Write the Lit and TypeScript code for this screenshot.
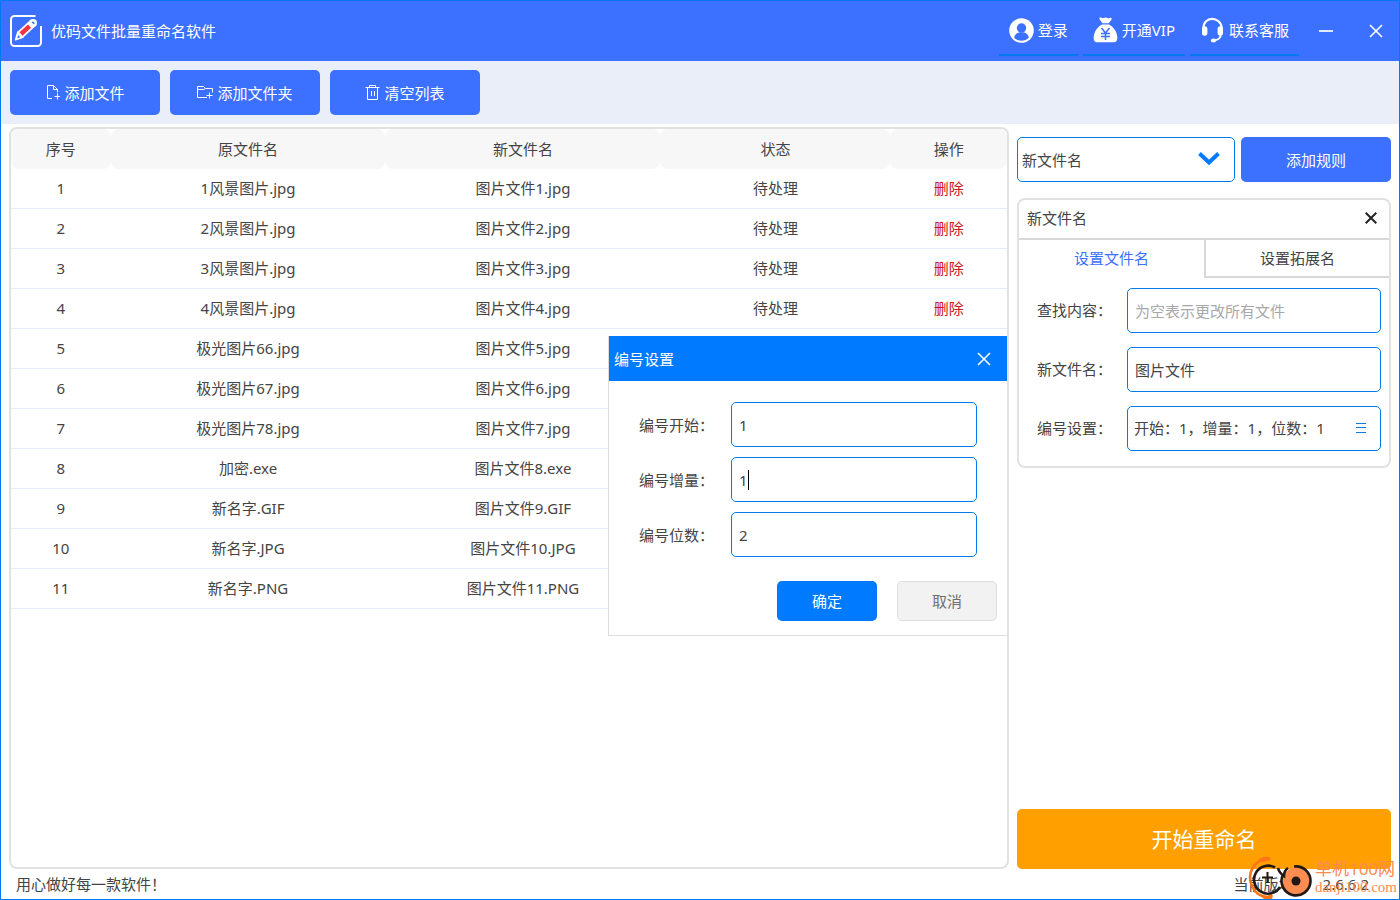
import { LitElement, html, css, svg } from "lit";
import { customElement, state } from "lit/decorators.js";

interface FileRow {
  source: string;
  target: string;
}

const ROWS: FileRow[] = [
  { source: "1风景图片.jpg", target: "图片文件1.jpg" },
  { source: "2风景图片.jpg", target: "图片文件2.jpg" },
  { source: "3风景图片.jpg", target: "图片文件3.jpg" },
  { source: "4风景图片.jpg", target: "图片文件4.jpg" },
  { source: "极光图片66.jpg", target: "图片文件5.jpg" },
  { source: "极光图片67.jpg", target: "图片文件6.jpg" },
  { source: "极光图片78.jpg", target: "图片文件7.jpg" },
  { source: "加密.exe", target: "图片文件8.exe" },
  { source: "新名字.GIF", target: "图片文件9.GIF" },
  { source: "新名字.JPG", target: "图片文件10.JPG" },
  { source: "新名字.PNG", target: "图片文件11.PNG" },
];

const base = css`
  *, *::before, *::after { box-sizing: border-box; }
  button, input, select {
    font: inherit;
    color: inherit;
    margin: 0;
    padding: 0;
    border: 0;
    background: none;
    outline: none;
  }
  svg { display: block; flex: none; }
`;

const cross = html`<svg width="14" height="14" viewBox="0 0 14 14" fill="none" stroke="currentColor" stroke-width="1.6">
  <path d="M1 1 13 13M13 1 1 13" />
</svg>`;

@customElement("title-bar")
export class TitleBar extends LitElement {
  static styles = [base, css`
    :host {
      display: flex;
      align-items: center;
      justify-content: space-between;
      height: 60px;
      padding: 0 16px 0 8px;
      background: #3c70ff;
      color: #fff;
    }
    .brand { display: flex; align-items: center; gap: 8px; }
    .actions { display: flex; align-items: center; gap: 5px; }
    .link {
      display: flex;
      align-items: center;
      gap: 4px;
      height: 50px;
      padding: 0 10px;
      border-bottom: 2px solid #0078f0;
      color: inherit;
      text-decoration: none;
      white-space: nowrap;
    }
    .win { display: flex; align-items: center; justify-content: center; width: 14px; height: 30px; }
    .window { display: flex; gap: 36px; margin-left: 15px; }
  `];

  render() {
    return html`
      <div class="brand">
        <svg width="34" height="34" viewBox="0 0 34 34" fill="none">
          <path d="M26.500 2H5.500A3.500 3.500 0 0 0 2 5.500v23A3.500 3.500 0 0 0 5.500 32h23a3.500 3.500 0 0 0 3.500-3.500V12" stroke="#fff" stroke-width="2" />
          <path d="M11.500 20.500 24 9" stroke="#fff" stroke-width="8" />
          <circle cx="24" cy="9" r="4" fill="#fff" />
          <path d="M8.700 17.500 6.200 26.200l8.100-2.800Z" fill="#fff" stroke="#fff" stroke-linejoin="round" />
          <path d="m12 20 8.500-7.800" stroke="#f5333f" stroke-width="4.500" />
          <path d="M22.500 8.200a1.700 1.700 0 0 1 2.600 2.300ZM9.300 21l-.9 3.200 3-1Z" fill="#3c70ff" />
        </svg>
        <span>优码文件批量重命名软件</span>
      </div>
      <nav class="actions">
        <a class="link" href="#login">
          <svg width="25" height="25" viewBox="0 0 25 25">
            <circle cx="12.500" cy="12.500" r="12.300" fill="#fff" />
            <circle cx="12.500" cy="10" r="4.700" fill="#3c70ff" />
            <path d="M5.200 19.800c.6-3.600 3-5.600 7.300-5.600s6.700 2 7.300 5.600c-2 2-4.300 2.900-7.300 2.900s-5.300-.9-7.300-2.900Z" fill="#3c70ff" />
          </svg>
          <span>登录</span>
        </a>
        <a class="link" href="#vip">
          <svg width="25" height="26" viewBox="0 0 25 26">
            <path fill="#fff" d="M6.500.8c1.700-.9 2.700 1 4 .3 1.300-.8 2.700-.8 4 0 1.300.7 2.500-1 4-.2.700 2.400-1.800 3.200-2.600 5.400H9.200C8.600 3.900 6 3.200 6.500.8ZM9 7.600h7c4.800 2.600 7.800 7 8.300 12.500.2 3.600-1.300 5.200-3.300 5.200H4c-2.200 0-3.500-1.600-3.300-5C1.200 14.600 4.200 10.200 9 7.600Z" />
            <path fill="none" stroke="#3c70ff" stroke-width="1.500" d="m8.500 11 4 5 4-5M12.500 16v7M8 16.500h9M8 19.500h9" />
          </svg>
          <span>开通VIP</span>
        </a>
        <a class="link" href="#support">
          <svg width="25" height="26" viewBox="0 0 25 26" fill="none" stroke="#fff">
            <path d="M3.500 11C3.500 5.200 7.500 1.800 12 1.800s9.600 3.400 9.600 9.200" stroke-width="2.200" />
            <path d="M4.700 12v4M20.300 12v4" stroke-width="5.400" stroke-linecap="round" />
            <path d="M21 17c-.2 4-2.700 6-7 6.600" stroke-width="1.800" />
            <ellipse cx="13.500" cy="23.500" rx="2.700" ry="2" fill="#fff" stroke="none" />
          </svg>
          <span>联系客服</span>
        </a>
        <span class="window">
          <button class="win" aria-label="最小化">
            <svg width="14" height="2" viewBox="0 0 14 2"><path d="M0 1h14" stroke="#fff" stroke-width="2" stroke-opacity=".85" /></svg>
          </button>
          <button class="win" aria-label="关闭">${cross}</button>
        </span>
      </nav>
    `;
  }
}

@customElement("tool-bar")
export class ToolBar extends LitElement {
  static styles = [base, css`
    :host { display: flex; gap: 10px; padding: 9px; background: #e9eef8; }
    .btn {
      display: flex;
      align-items: center;
      justify-content: center;
      gap: 4px;
      width: 150px;
      height: 45px;
      border-radius: 5px;
      background: #3c70ff;
      color: #fff;
    }
  `];

  render() {
    const line = (w: number, d: string) => html`
      <svg width=${w} height="18" viewBox="0 0 ${w} 18" fill="none" stroke="#fff">${svg`<path d=${d} />`}</svg>`;
    return html`
      <button class="btn">
        ${line(15, "M7 14.500H2.500v-13h6l4 4v3M8.500 1.500v4h4M12.500 9.500v6M9.500 12.500h6")}
        <span>添加文件</span>
      </button>
      <button class="btn">
        ${line(16, "M10 13.500H.500v-11h6l2 2h7v4M.500 5.500h6l2-1M12.500 8.500v6M9.500 11.500h6")}
        <span>添加文件夹</span>
      </button>
      <button class="btn">
        ${line(15, "M.500 3.500h14M4.500 3V1.500h6V3M2.500 3.500v12h10v-12M6.500 7v5M9.500 7v5")}
        <span>清空列表</span>
      </button>
    `;
  }
}

@customElement("file-table")
export class FileTable extends LitElement {
  static styles = [base, css`
    :host { display: block; }
    .grid { width: 100%; table-layout: fixed; border-collapse: separate; border-spacing: 0; text-align: center; }
    .c-no { width: 10%; }
    .c-name { width: 27.6%; }
    .c-state { width: 23.1%; }
    .head { height: 40px; padding: 0; border-radius: 8px; background: #f7f7f7; font-weight: 400; }
    .cell { height: 40px; padding: 0 0 2px; border-bottom: 1px solid #e3eef9; }
    .remove { color: #c8161d; }
  `];

  render() {
    return html`
      <table class="grid">
        <colgroup>
          <col class="c-no" /><col class="c-name" /><col class="c-name" /><col class="c-state" /><col />
        </colgroup>
        <thead>
          <tr>
            ${["序号", "原文件名", "新文件名", "状态", "操作"].map((t) => html`<th class="head" scope="col">${t}</th>`)}
          </tr>
        </thead>
        <tbody>
          ${ROWS.map((row, i) => html`
            <tr>
              <td class="cell">${i + 1}</td>
              <td class="cell">${row.source}</td>
              <td class="cell">${row.target}</td>
              <td class="cell">待处理</td>
              <td class="cell"><button class="remove">删除</button></td>
            </tr>
          `)}
        </tbody>
      </table>
    `;
  }
}

@customElement("number-dialog")
export class NumberDialog extends LitElement {
  static styles = [base, css`
    :host { display: block; background: #fff; border: 1px solid #dcdcdc; border-width: 0 0 1px 1px; }
    .bar {
      display: flex;
      align-items: center;
      justify-content: space-between;
      height: 45px;
      padding: 0 16px 0 5px;
      background: #007bff;
      color: #fff;
    }
    .close { display: flex; }
    .fields { display: grid; grid-template-columns: 92px 1fr; gap: 10px 0; align-items: center; padding: 21px 30px 24px; }
    .box { position: relative; }
    .input { width: 100%; height: 45px; padding: 0 7px; border: 1px solid #007be8; border-radius: 5px; }
    .caret { position: absolute; left: 17px; top: 13px; width: 1px; height: 20px; background: #000; }
    .buttons { display: flex; justify-content: flex-end; gap: 20px; padding: 0 10px 14px; }
    .btn { width: 100px; height: 40px; border-radius: 5px; }
    .ok { background: #007bff; color: #fff; }
    .cancel { border: 1px solid #dedede; background: #f2f2f2; color: #707070; }
  `];

  render() {
    return html`
      <div class="bar"><span>编号设置</span><button class="close" aria-label="关闭">${cross}</button></div>
      <div class="fields">
        <label for="start">编号开始：</label>
        <div class="box"><input class="input" id="start" value="1" /></div>
        <label for="step">编号增量：</label>
        <div class="box"><input class="input" id="step" value="1" /><span class="caret"></span></div>
        <label for="digits">编号位数：</label>
        <div class="box"><input class="input" id="digits" value="2" /></div>
      </div>
      <div class="buttons">
        <button class="btn ok">确定</button>
        <button class="btn cancel">取消</button>
      </div>
    `;
  }
}

@customElement("rule-panel")
export class RulePanel extends LitElement {
  @state() private tab = 0;

  static styles = [base, css`
    :host { display: flex; flex-direction: column; }
    .picker { display: grid; grid-template-columns: 1fr 150px; gap: 6px; margin-bottom: 16px; }
    .choose { position: relative; display: block; }
    .select {
      appearance: none;
      width: 100%;
      height: 45px;
      padding: 0 40px 0 4px;
      border: 1px solid #007be8;
      border-radius: 5px;
      background: #fff;
    }
    .chevron { position: absolute; right: 15px; top: 14px; color: #007bff; pointer-events: none; }
    .add { height: 45px; border-radius: 5px; background: #3c70ff; color: #fff; }
    .card { border: 2px solid #e1e1e1; border-radius: 8px; }
    .title {
      display: flex;
      align-items: center;
      justify-content: space-between;
      height: 40px;
      padding: 0 12px 2px 8px;
      border-bottom: 2px solid #d8d8d8;
    }
    .close { display: flex; color: #222; }
    .tabs { display: grid; grid-template-columns: 1fr 1fr; }
    .tab { height: 38px; border: 0 solid #d8d8d8; border-bottom-width: 2px; }
    .tab + .tab { border-left-width: 2px; }
    .tab.on { border-color: transparent; color: #3c70ff; }
    .fields { display: grid; grid-template-columns: 90px 1fr; gap: 14px 0; align-items: center; padding: 10px 8px 15px 18px; }
    .label { padding-bottom: 2px; }
    .input { width: 100%; height: 45px; padding: 0 7px; border: 1px solid #007be8; border-radius: 5px; }
    .input::placeholder { color: #a8a8a8; opacity: 1; }
    .numbering { display: flex; align-items: center; justify-content: space-between; padding: 0 14px 2px 6px; text-align: left; white-space: nowrap; }
    .start { height: 60px; margin-top: auto; border-radius: 5px; background: #ffa000; color: #fff; font-size: 21px; }
  `];

  render() {
    const tabs = ["设置文件名", "设置拓展名"];
    return html`
      <div class="picker">
        <label class="choose">
          <select class="select" aria-label="规则"><option>新文件名</option></select>
          <svg class="chevron" width="22" height="16" viewBox="0 0 22 16" fill="none" stroke="currentColor" stroke-width="4">
            <path d="m1.500 2.500 9.500 9 9.500-9" />
          </svg>
        </label>
        <button class="add">添加规则</button>
      </div>
      <section class="card">
        <div class="title"><span>新文件名</span><button class="close" aria-label="移除规则">
          <svg width="12" height="12" viewBox="0 0 12 12" stroke="currentColor" stroke-width="2"><path d="M.7.7l10.600 10.600M11.300.7.7 11.300" /></svg>
        </button></div>
        <div class="tabs" role="tablist">
          ${tabs.map((t, i) => html`
            <button class="tab ${this.tab === i ? "on" : ""}" role="tab" aria-selected=${this.tab === i} @click=${() => (this.tab = i)}>${t}</button>
          `)}
        </div>
        <div class="fields">
          <label class="label" for="find">查找内容：</label>
          <input class="input" id="find" placeholder="为空表示更改所有文件" />
          <label class="label" for="name">新文件名：</label>
          <input class="input" id="name" value="图片文件" />
          <label class="label" for="numbering">编号设置：</label>
          <button class="input numbering" id="numbering">
            <span>开始：1，增量：1，位数：1</span>
            <svg width="10" height="10" viewBox="0 0 10 10" stroke="#0f7ae5"><path d="M0 .5h10M0 4.500h10M0 9.500h10" /></svg>
          </button>
        </div>
      </section>
      <button class="start">开始重命名</button>
    `;
  }
}

@customElement("site-mark")
export class SiteMark extends LitElement {
  static styles = [base, css`
    :host { display: flex; align-items: center; gap: 2px; pointer-events: none; }
    .words { display: flex; flex-direction: column; color: #ff8a50; white-space: nowrap; }
    .cn { font-size: 17px; line-height: 20px; }
    .en { font-family: "Liberation Serif", serif; font-size: 15px; line-height: 16px; }
  `];

  render() {
    return html`
      <svg width="66" height="44" viewBox="0 0 66 44" fill="none">
        <path d="M23 4C20 2 15 3 11 7 3 14 1 22 5 31c3 7 9 11 16 11l4-2" stroke="#ff7518" stroke-width="2.600" />
        <path d="M20 2.500c-3 0-6 2-7 5l10-2ZM12 39c4 5 10 4 14 1l-1 4H17Z" fill="#ff7518" />
        <path d="M28 12.500A14 14 0 1 0 33 32" stroke="#221815" stroke-width="2.600" />
        <path d="M20.500 17v11M15 22.500h11" stroke="#221815" stroke-width="2" />
        <circle cx="49" cy="26" r="13.500" fill="#ff8c50" />
        <path d="M47 11.500a14.500 14.500 0 1 1-11 8M31 13c1 4 3 6 6 8 0-4 1-6 4-8" stroke="#221815" stroke-width="2.600" />
        <circle cx="49" cy="26" r="4.500" fill="#221815" />
      </svg>
      <span class="words"><span class="cn">单机100网</span><span class="en">danji100.com</span></span>
    `;
  }
}

@customElement("app-root")
export class AppRoot extends LitElement {
  static styles = [base, css`
    :host {
      position: relative;
      display: flex;
      flex-direction: column;
      min-height: 100vh;
      overflow: hidden;
      box-sizing: border-box;
      border: 1px solid #0078f0;
      background: #fff;
      color: #444;
      font: 15px/20px "Noto Sans", "Noto Sans CJK SC", sans-serif;
    }
    .main { flex: 1; display: grid; grid-template-columns: 1fr 374px; gap: 8px; padding: 3px 8px 0; }
    .list { position: relative; border: 2px solid #e1e1e1; border-radius: 8px; }
    .dialog { position: absolute; right: 0; top: 207px; width: 399px; }
    .rules { padding-top: 10px; }
    .foot { display: flex; justify-content: space-between; height: 30px; padding: 5px 30px 5px 15px; }
    .version { display: flex; gap: 14px; }
    .mark { position: absolute; right: 2px; bottom: 0; }
  `];

  render() {
    return html`
      <title-bar></title-bar>
      <tool-bar></tool-bar>
      <main class="main">
        <div class="list">
          <file-table></file-table>
          <number-dialog class="dialog" role="dialog" aria-label="编号设置"></number-dialog>
        </div>
        <rule-panel class="rules"></rule-panel>
      </main>
      <footer class="foot">
        <span>用心做好每一款软件！</span>
        <span class="version"><span>当前版本：</span><span>2.6.6.2</span></span>
      </footer>
      <site-mark class="mark" aria-hidden="true"></site-mark>
    `;
  }
}
